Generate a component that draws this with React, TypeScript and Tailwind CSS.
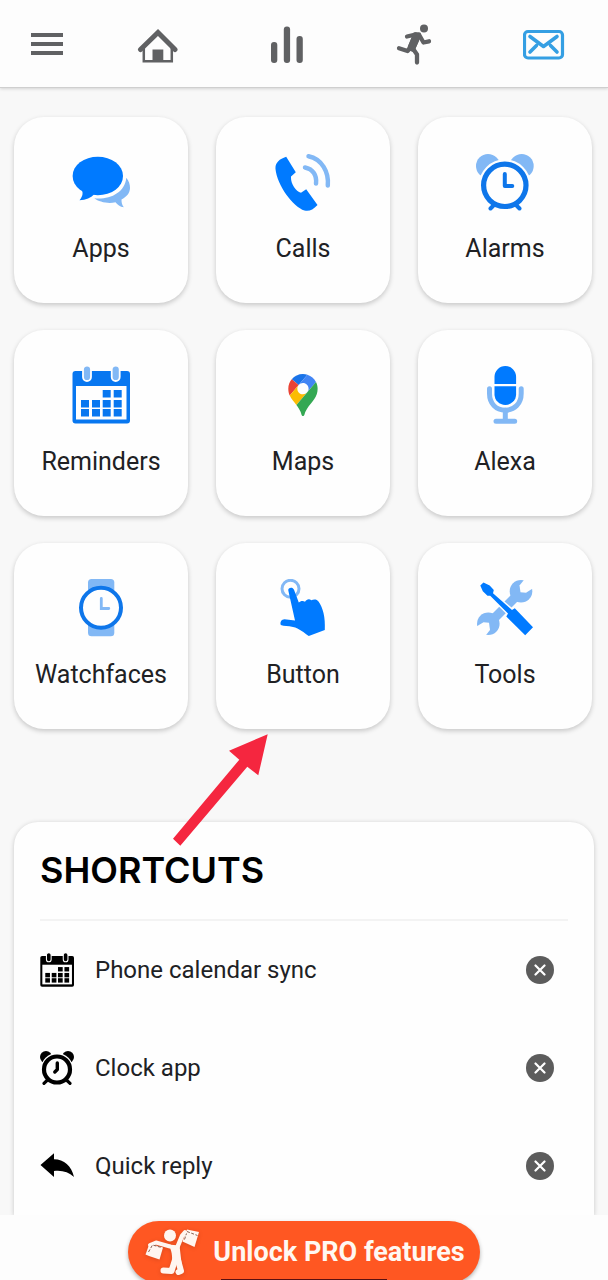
import type { ReactNode } from 'react';

const BLUE = '#007aff';
const LIGHT = '#82b8f5';

function ChatIcon() {
  return (
    <svg viewBox="0 0 58 58" className="h-[58px] w-[58px]" aria-hidden="true">
      <path
        fill={LIGHT}
        d="M54.3 24.7C57 28 58 31 58 35c0 5-3.5 9-8.5 11.5 0 3 .5 5.5 2.3 7.8-3.8-.5-6.3-2.3-8.3-5C36 51 27 49 22.3 45.3 37 47 53 40 54.3 24.7Z"
      />
      <ellipse cx="25.8" cy="23" rx="25.2" ry="19.3" fill={BLUE} />
      <path fill={BLUE} d="M8 34c4 5 3 9-.5 13.3C14 47 19 45 22 41.5Z" />
    </svg>
  );
}

function CallIcon() {
  return (
    <svg viewBox="0 0 58 58" className="h-[58px] w-[58px]" aria-hidden="true">
      <path
        fill={BLUE}
        d="M12.2 3.7 21.8 19.3 17 23.5C16.5 30 21.5 38.5 27 39.7L32.2 36.3 43.5 52C39 57 35 58.5 30.5 57.5 19 54 3 32 1.5 16 1 10 5 6 12.2 3.7Z"
      />
      <path
        d="M34.5 3.2C48 6 55 19 53.8 32.5M31 14.5C39 16 43 22.5 42 30.5"
        fill="none"
        stroke={LIGHT}
        strokeWidth="4.5"
        strokeLinecap="round"
      />
    </svg>
  );
}

function AlarmIcon() {
  return (
    <svg viewBox="0 0 58 58" className="h-[58px] w-[58px]" aria-hidden="true">
      <circle cx="12" cy="13" r="12" fill={LIGHT} />
      <circle cx="45.7" cy="13" r="12" fill={LIGHT} />
      <circle cx="28.8" cy="32.3" r="26" fill="#fefefe" />
      <g fill="none" stroke="#0e76ea" strokeLinecap="round">
        <circle cx="28.8" cy="32.3" r="21.2" strokeWidth="5.2" />
        <path d="M28.8 21v12h7.5" strokeWidth="4" strokeLinejoin="round" />
        <path d="M17 53l-2.5 2.5M41 53l2.5 2.5" strokeWidth="4" />
      </g>
    </svg>
  );
}

type CalendarIconProps = { color: string; rings: string; className: string };

function CalendarIcon({ color, rings, className }: CalendarIconProps) {
  const cells = [
    [30.7, 24], [41.7, 24],
    [9, 34], [20, 34], [30.7, 34], [41.7, 34],
    [9, 43], [20, 43], [30.7, 43], [41.7, 43],
  ];
  return (
    <svg viewBox="0 0 58 58" className={className} aria-hidden="true">
      <rect x=".5" y="5" width="57.5" height="52.5" rx="3" fill={color} />
      <rect x="4" y="20" width="50.5" height="33.5" fill="#fefefe" />
      {cells.map(([x, y]) => (
        <rect key={`${x}-${y}`} x={x} y={y} width="8" height="7.5" fill={color} />
      ))}
      <rect x="11" y="-.5" width="8" height="15.5" rx="4" fill={rings} stroke="#fefefe" strokeWidth="1.8" />
      <rect x="39.7" y="-.5" width="8" height="15.5" rx="4" fill={rings} stroke="#fefefe" strokeWidth="1.8" />
    </svg>
  );
}

function MapsIcon() {
  return (
    <svg viewBox="0 0 58 58" className="h-[58px] w-[58px]" aria-hidden="true">
      <g transform="translate(14.3 8) scale(.3175)">
        <path fill="#1a73e8" d="M60.2 2.2C55.8.8 51 0 46.1 0 32 0 19.3 6.4 10.8 16.5l21.8 18.3L60.2 2.2z" />
        <path fill="#ea4335" d="M10.8 16.5C4.1 24.5 0 34.9 0 46.1c0 8.7 1.7 15.7 4.6 22l28-33.3-21.8-18.3z" />
        <path fill="#4285f4" d="M46.2 28.5c9.8 0 17.7 7.9 17.7 17.7 0 4.3-1.6 8.3-4.2 11.4 0 0 13.9-16.6 27.5-32.7-5.6-10.8-15.3-19-27-22.7L32.6 34.8c3.3-3.8 8.1-6.3 13.6-6.3" />
        <path fill="#fbbc04" d="M46.2 63.8c-9.8 0-17.7-7.9-17.7-17.7 0-4.3 1.5-8.3 4.1-11.3l-28 33.3c4.8 10.6 12.8 19.2 21 29.9l34.1-40.5c-3.3 3.9-8.1 6.3-13.5 6.3" />
        <path fill="#34a853" d="M59.1 109.2c15.4-24.1 33.3-35 33.3-63 0-7.7-1.9-14.9-5.2-21.3L25.6 98c2.6 3.4 5.3 7.3 7.9 11.3 9.4 14.5 6.8 23.1 12.8 23.1s3.4-8.7 12.8-23.2" />
      </g>
    </svg>
  );
}

function MicIcon() {
  return (
    <svg viewBox="0 0 58 58" className="h-[58px] w-[58px]" aria-hidden="true">
      <path d="M18.5 18V10.8a10.8 10.8 0 0 1 21.6 0V18Z" fill={BLUE} />
      <path d="M18.5 20.3h21.6v7.9a10.8 10.8 0 0 1-21.6 0Z" fill={BLUE} />
      <path
        d="M13.5 22.8v4.7c0 10 6.5 16.7 15.8 16.7s15.9-6.7 15.9-16.7v-4.7M29.3 44v10M20 55.3h18.7"
        fill="none"
        stroke={LIGHT}
        strokeWidth="5"
        strokeLinecap="round"
      />
    </svg>
  );
}

function WatchIcon() {
  return (
    <svg viewBox="0 0 58 58" className="h-[58px] w-[58px]" aria-hidden="true">
      <rect x="16" width="26.3" height="57.3" rx="3.5" fill={LIGHT} />
      <circle cx="29" cy="28.8" r="20" fill="#fefefe" stroke="#0e76ea" strokeWidth="4" />
      <path d="M29.3 19.5v10h7.5" fill="none" stroke={LIGHT} strokeWidth="2.8" strokeLinecap="round" />
    </svg>
  );
}

function TouchIcon() {
  return (
    <svg viewBox="0 0 58 58" className="h-[58px] w-[58px]" aria-hidden="true">
      <circle cx="16.5" cy="9.8" r="8.5" fill="none" stroke={LIGHT} strokeWidth="3" />
      <path
        d="M14.3 11.5C13.8 8.5 18.8 7.5 20 10.8L24.8 23.5C26.500 21.5 29.5 21.5 31 22.8 32.5 20 35.5 19.5 37.3 21.3 39.5 20 43 20 44.5 22.500 49 29 51.5 38 50.8 51L34.8 57C31 54.5 25 49 19 48 14 46.5 10 47.5 6.8 46 5.8 43 7.5 40.5 10.5 40.3L21 41.5Z"
        fill={BLUE}
      />
    </svg>
  );
}

function ToolsIcon() {
  return (
    <svg viewBox="0 0 58 58" className="h-[58px] w-[58px]" aria-hidden="true">
      <g fill={LIGHT}>
        <circle cx="45" cy="12.3" r="11.3" />
        <circle cx="12.3" cy="44.8" r="11.3" />
        <path d="M14 37 36.5 14.5 43 21 20.5 43.5Z" />
      </g>
      <path d="M49.500-1 43.5 6.5 44.5 13.3 50 13.8 57.5 9 60-3Z" fill="#fefefe" />
      <path d="M8 58.5 14 51 13 43.8 7.5 43.3-.5 48-3 60Z" fill="#fefefe" />
      <path
        d="M7.5 3.5 13.7 6.500 17.8 11 17 14.3 36 31 38.8 29.3 57 48.2 49.2 56.3 30.3 37.5 32 34.5 14.2 16.8 11.5 16.8 6.8 12.3 4.300 6.500Z"
        fill={BLUE}
        stroke="#fefefe"
        strokeWidth="3"
        paintOrder="stroke"
      />
    </svg>
  );
}

function ClockIcon() {
  return (
    <svg viewBox="0 0 34 34" className="h-[34px] w-[34px]" aria-hidden="true">
      <circle cx="6" cy="6" r="6" />
      <circle cx="28" cy="6" r="6" />
      <circle cx="17" cy="18.3" r="16.2" fill="#fefefe" />
      <g fill="none" stroke="#000" strokeLinecap="round">
        <circle cx="17" cy="18.5" r="13" strokeWidth="4.2" />
        <path d="M17.3 12v6.5l-2.500 2.500" strokeWidth="3.400" strokeLinejoin="round" />
        <path d="M7.500 29 4 32.300M26.500 29l3.500 3.300" strokeWidth="3.200" />
      </g>
    </svg>
  );
}

function ReplyIcon() {
  return (
    <svg viewBox="0 0 34 34" className="h-[34px] w-[34px]" aria-hidden="true">
      <path d="M.5 16 14 4.300v6C24 10.500 31.500 17 34 28 28.500 23 22 21 14 22v6Z" />
    </svg>
  );
}

function PartyIcon() {
  return (
    <svg viewBox="0 0 56 48" className="h-12 w-14 drop-shadow-sm" aria-hidden="true">
      <g fill="none" stroke="#fff6f0" strokeLinecap="round" strokeLinejoin="round">
        <path d="M26 18.500 12 14.500 6 17" strokeWidth="4" />
        <path d="M33 20 38 8l3-3.500" strokeWidth="4.500" />
        <path d="M31 32 27.500 43 19.500 42.500" strokeWidth="6" />
        <path d="M34 32l3 11-2.500 1" strokeWidth="6" />
      </g>
      <circle cx="26" cy="7.500" r="6" fill="#fff6f0" />
      <path d="M24 16.500 35.500 17.500 37.500 35 28 36C28.500 28 28 22 24 16.500Z" fill="#fff6f0" />
      <path d="M5 17 1.500 26.500 5 28l10.500 3.500L19 19.500 10 17Z" fill="#fff6f0" />
      <path d="M43 1.500 55 4 50.500 19 38.500 13.500Z" fill="#fff6f0" />
      <path
        d="M4.500 24l4-7 9 2.500M43 3.500l10.500 4M40.500 11.500l2-6"
        fill="none"
        stroke="#6b3a2a"
        strokeWidth=".8"
        strokeDasharray="3 1.5"
      />
    </svg>
  );
}

const navItems: { label: string; icon: ReactNode }[] = [
  {
    label: 'Home',
    icon: (
      <>
        <path d="M3.500 26.500 21 9.500 38 26.500" fill="none" stroke="#606163" strokeWidth="5" strokeLinecap="round" />
        <path d="M6.800 24v14.300h28V24" fill="none" stroke="#606163" strokeWidth="2.500" />
        <path d="M15.500 26.500h10.800V39H15.500Z" fill="#606163" />
      </>
    ),
  },
  {
    label: 'Statistics',
    icon: (
      <g fill="#606163">
        <rect x="5" y="19" width="6.3" height="21" rx="3" />
        <rect x="17.8" y="3.5" width="6.3" height="36.5" rx="3" />
        <rect x="30.5" y="13" width="6.3" height="27" rx="3" />
      </g>
    ),
  },
  {
    label: 'Activity',
    icon: (
      <g fill="none" stroke="#606163" strokeWidth="4.3" strokeLinecap="round" strokeLinejoin="round">
        <circle cx="30" cy="5.5" r="4" fill="#606163" stroke="none" />
        <path d="M21.500 11.500 13 13.500" />
        <path d="M25.500 12.500 29.500 19.500 35 18.300" />
        <path d="M5 25.200 13.500 28 17 24" />
        <path d="M18.500 25 23 31.500V39.500" />
        <path d="M22.500 13.500 17.500 25" strokeWidth="8" strokeLinecap="butt" />
        <path d="M21 11.500h4L22.500 18 18.500 26.500 15.500 25Z" />
      </g>
    ),
  },
  {
    label: 'Messages',
    icon: (
      <g fill="none" stroke="#359fe3" strokeLinecap="round" strokeLinejoin="round">
        <rect x="1.5" y="8.5" width="38" height="26.500" rx="3.5" strokeWidth="3.2" />
        <path d="M7 13.500 20.500 23.500 34 13.500M7 29 13.500 22.500M34 29 27.500 22.500" strokeWidth="3.6" />
      </g>
    ),
  },
];

const tiles: { label: string; icon: ReactNode }[] = [
  { label: 'Apps', icon: <ChatIcon /> },
  { label: 'Calls', icon: <CallIcon /> },
  { label: 'Alarms', icon: <AlarmIcon /> },
  {
    label: 'Reminders',
    icon: <CalendarIcon color="#0877f0" rings={LIGHT} className="h-[58px] w-[58px]" />,
  },
  { label: 'Maps', icon: <MapsIcon /> },
  { label: 'Alexa', icon: <MicIcon /> },
  { label: 'Watchfaces', icon: <WatchIcon /> },
  { label: 'Button', icon: <TouchIcon /> },
  { label: 'Tools', icon: <ToolsIcon /> },
];

const shortcuts: { label: string; icon: ReactNode }[] = [
  {
    label: 'Phone calendar sync',
    icon: <CalendarIcon color="#000" rings="#000" className="h-[34px] w-[34px]" />,
  },
  { label: 'Clock app', icon: <ClockIcon /> },
  { label: 'Quick reply', icon: <ReplyIcon /> },
];

function Header() {
  return (
    <header className="z-10 flex h-[88px] shrink-0 items-center border-b border-[#cfcfcf] bg-[#fdfdfd] shadow-[0_1px_3px_rgba(0,0,0,0.15)]">
      <button type="button" aria-label="Menu" className="flex w-[94px] flex-col items-center gap-[5px]">
        <span className="h-1 w-8 bg-[#606163]" />
        <span className="h-1 w-8 bg-[#606163]" />
        <span className="h-1 w-8 bg-[#606163]" />
      </button>
      <nav className="flex flex-1">
        {navItems.map((item) => (
          <button key={item.label} type="button" aria-label={item.label} className="flex flex-1 justify-center">
            <svg viewBox="0 0 42 42" className="h-[42px] w-[42px]">
              {item.icon}
            </svg>
          </button>
        ))}
      </nav>
    </header>
  );
}

export default function App() {
  return (
    <div className="flex h-screen flex-col overflow-hidden bg-[#f8f8f8] font-['Roboto',sans-serif] text-[#202124]">
      <Header />

      <main className="flex-1 overflow-y-auto [scrollbar-width:none]">
        <section className="grid grid-cols-3 gap-x-7 gap-y-[27px] pt-[29px] pr-4 pl-[14px]">
          {tiles.map((tile) => (
            <button
              key={tile.label}
              type="button"
              className="flex h-[186px] flex-col items-center gap-[22px] rounded-[30px] bg-[#fefefe] pt-9 shadow-[0_2px_5px_rgba(0,0,0,0.2)]"
            >
              {tile.icon}
              <span className="text-[25px] leading-8">{tile.label}</span>
            </button>
          ))}
        </section>

        <section className="relative mx-[14px] mt-[93px] rounded-t-[24px] bg-[#fefefe] px-[26px] pt-7 shadow-[0_1px_5px_rgba(0,0,0,0.2)]">
          {/* Pointer to the Button tile */}
          <svg viewBox="0 0 96 112" className="absolute -top-[88px] left-[158px] h-28 w-24" aria-hidden="true">
            <path d="M95.700.3 57 16.700 67.300 25.700 1 104.700 8.300 111.700 75.300 32.700 86.300 41.300Z" fill="#f5263f" />
          </svg>

          <h2 className="border-b-2 border-[#f3f3f3] pb-[29px] font-['Inter',sans-serif] text-[36px] leading-[40px] font-semibold text-black">
            SHORTCUTS
          </h2>
          <ul>
            {shortcuts.map((item) => (
              <li key={item.label} className="flex h-[98px] items-center gap-[21px] pr-[14px]">
                {item.icon}
                <span className="flex-1 text-[24px] leading-8">{item.label}</span>
                <button
                  type="button"
                  aria-label={`Remove ${item.label}`}
                  className="flex h-7 w-7 items-center justify-center rounded-full bg-[#5c5c5c]"
                >
                  <svg viewBox="0 0 12 12" className="h-3 w-3" fill="none" stroke="#fff" strokeWidth="2.2" strokeLinecap="round">
                    <path d="M1.500 1.500l9 9M10.500 1.500l-9 9" />
                  </svg>
                </button>
              </li>
            ))}
          </ul>
        </section>
      </main>

      <footer className="relative z-10 flex h-[65px] shrink-0 items-start justify-center bg-[#fdfdfd] pt-[6px]">
        <button
          type="button"
          className="flex h-[62px] shrink-0 items-center gap-[13px] rounded-full bg-[#ff5722] pr-[15px] pl-4 text-[27px] leading-8 font-bold text-[#fff8f2] shadow-[0_2px_4px_rgba(0,0,0,0.3)]"
        >
          <PartyIcon />
          Unlock PRO features
        </button>
        <div className="absolute bottom-0 left-1/2 h-px w-[166px] -translate-x-1/2 bg-[#5a1010]" />
      </footer>
    </div>
  );
}
